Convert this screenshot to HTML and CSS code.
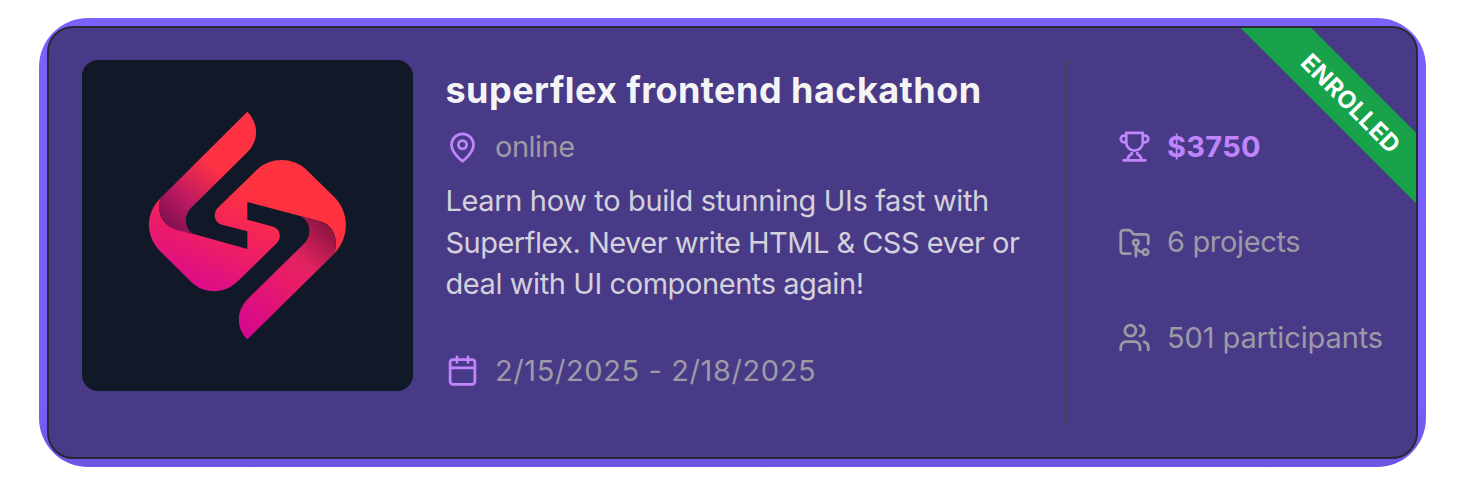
FILE: index.html
```html
<!DOCTYPE html>
<html lang="en">
<head>
<meta charset="utf-8">
<title>Hackathon</title>
<link rel="stylesheet" href="styles.css">
</head>
<body>
<div class="frame">
<article class="card">
  <div class="cover">
    <svg viewBox="-144 -120 990 990">
      <defs>
        <linearGradient id="body" gradientUnits="userSpaceOnUse" x1="210" y1="590" x2="350" y2="270"><stop offset="0" stop-color="#d80a90"/><stop offset=".48" stop-color="#ee1d65"/><stop offset="1" stop-color="#ff3240"/></linearGradient>
        <linearGradient id="up" gradientUnits="userSpaceOnUse" x1="115" y1="380" x2="265" y2="205"><stop offset="0" stop-color="#811052"/><stop offset=".45" stop-color="#c01b60"/><stop offset="1" stop-color="#ff3243"/></linearGradient>
        <linearGradient id="down" gradientUnits="userSpaceOnUse" x1="610" y1="385" x2="340" y2="710"><stop offset="0" stop-color="#8c1440"/><stop offset=".32" stop-color="#e0235f"/><stop offset=".5" stop-color="#e91b68"/><stop offset="1" stop-color="#d30792"/></linearGradient>
      </defs>
      <path fill="url(#body)" d="M92 294C45 340 45 408 92 455L180 542C220 584 283 584 325 542L440 430C457 412 450 387 430 380L352 359V306L570 364C618 378 625 430 612 462C660 412 658 338 615 293L530 210C490 170 420 170 380 210L262 325C247 343 255 369 275 374L352 394V447L140 388C85 370 82 325 92 294Z"/>
      <path fill="url(#up)" d="M352 35C387 70 387 123 352 157L182 325C158 350 163 394 200 406L140 390C94 376 78 332 92 294Z"/>
      <path fill="url(#down)" d="M352 718C317 683 319 633 352 598L522 431C548 405 541 362 510 348L568 363C612 378 627 422 612 462Z"/>
    </svg>
  </div>
  <div class="main">
    <h2 class="title">superflex frontend hackathon</h2>
    <div class="meta">
      <svg class="icon accent" viewBox="0 0 24 24"><path d="M20 10c0 6-8 12-8 12s-8-6-8-12a8 8 0 0 1 16 0Z"/><circle cx="12" cy="10" r="3"/></svg>
      <span class="online">online</span>
    </div>
    <p class="desc"><span class="l1">Learn how to build stunning UIs fast with</span><br><span class="l2">Superflex. Never write HTML &amp; CSS ever or</span><br><span class="l3">deal with UI components again!</span></p>
    <div class="meta">
      <svg class="icon accent" viewBox="0 0 24 24"><path d="M8 2v4M16 2v4M3 10h18"/><rect x="3" y="4" width="18" height="18" rx="2"/></svg>
      <span class="dates">2/15/2025 - 2/18/2025</span>
    </div>
  </div>
  <div class="stats">
    <div class="stat accent">
      <svg class="icon" viewBox="0 0 24 24"><path d="M6 9H4.500a2.500 2.500 0 0 1 0-5H6M18 9h1.500a2.500 2.500 0 0 0 0-5H18M4 22h16M10 14.660V17c0 .55-.47.98-.97 1.210C7.850 18.750 7 20.240 7 22M14 14.660V17c0 .55.47.98.97 1.210C16.150 18.750 17 20.240 17 22M18 2H6v7a6 6 0 0 0 12 0V2Z"/></svg>
      <span class="prize">$3750</span>
    </div>
    <div class="stat">
      <svg class="icon" viewBox="0 0 24 24"><path d="M9 20H4a2 2 0 0 1-2-2V5a2 2 0 0 1 2-2h3.900a2 2 0 0 1 1.690.9l.81 1.200a2 2 0 0 0 1.670.9H20a2 2 0 0 1 2 2v5M18 19c-2.800 0-5-2.200-5-5v8"/><circle cx="13" cy="12" r="2"/><circle cx="20" cy="19" r="2"/></svg>
      <span class="projects">6 projects</span>
    </div>
    <div class="stat">
      <svg class="icon" viewBox="0 0 24 24"><path d="M16 21v-2a4 4 0 0 0-4-4H6a4 4 0 0 0-4 4v2M22 21v-2a4 4 0 0 0-3-3.870M16 3.130a4 4 0 0 1 0 7.750"/><circle cx="9" cy="7" r="4"/></svg>
      <span class="people">501 participants</span>
    </div>
  </div>
  <div class="ribbon"><span>ENROLLED</span></div>
</article>
</div>
</body>
</html>
```

FILE: styles.css
```css
* { box-sizing: border-box; }
body {
  margin: 0;
  padding: 18px 51px 21px 39px;
  background: #fff;
  font-family: Inter, "Liberation Sans", sans-serif;
}
.frame {
  height: 449px;
  padding: 8px;
  border-radius: 49px;
  background: linear-gradient(#7961fc, #775ff9 85%, #6d54e3);
}
.card {
  position: relative;
  display: flex;
  width: 1371px;
  height: 433px;
  padding: 32px 33px 32px;
  overflow: hidden;
  border: 2px solid #2b2836;
  border-radius: 26px;
  background: #493a88;
}
.cover {
  flex: none;
  width: 331px;
  height: 331px;
  overflow: hidden;
  border-radius: 16px;
  background: #111827;
}
.cover svg { display: block; width: 330px; height: 330px; }
.main {
  flex: none;
  width: 620.500px;
  margin-left: 32.500px;
  padding-top: 9px;
  white-space: nowrap;
}
.title {
  margin: 0;
  color: #f4f4f5;
  font-size: 36px;
  font-weight: 700;
  line-height: 42px;
  letter-spacing: .46px;
}
.meta, .stat {
  display: flex;
  align-items: center;
  height: 42px;
  color: #9d9aa5;
  font-size: 29px;
  white-space: nowrap;
}
.main > .meta:nth-child(2) { margin-top: 15px; }
.meta, .stat { gap: 16.500px; }
.icon {
  flex: none;
  width: 33px;
  height: 33px;
  fill: none;
  stroke: currentColor;
  stroke-width: 2;
  stroke-linecap: round;
  stroke-linejoin: round;
}
.accent { color: #c084fc; }
.online { position: relative; top: -1px; letter-spacing: -.5px; }
.desc {
  margin: 12px 0 45px;
  color: #d3d1dc;
  font-size: 29px;
  line-height: 41.500px;
}
.l1 { letter-spacing: -.36px; }
.l2 { letter-spacing: -.52px; }
.l3 { letter-spacing: -.42px; }
.dates { letter-spacing: .6px; }
.stats {
  display: flex;
  flex: none;
  flex-direction: column;
  gap: 53.500px;
  height: 364px;
  padding: 65px 0 0 49.500px;
  border-left: 2px solid #45434c;
}
.stat .icon { margin-top: 1px; }
.prize { font-weight: 700; letter-spacing: .3px; }
.projects { letter-spacing: -.35px; }
.people { letter-spacing: -.1px; }
.ribbon {
  position: absolute;
  top: 49px;
  left: 1151px;
  display: flex;
  align-items: center;
  justify-content: center;
  width: 300px;
  height: 50px;
  padding-left: 3px;
  transform: rotate(45deg);
  background: #18a34a;
  color: #fff;
  font-size: 24px;
  font-weight: 700;
  letter-spacing: .3px;
}
```
